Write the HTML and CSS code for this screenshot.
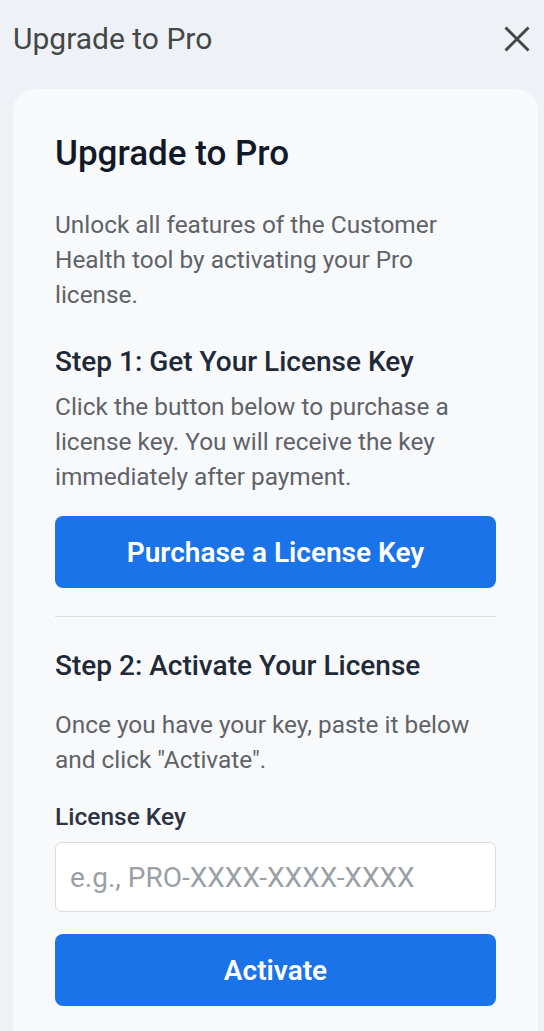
FILE: index.html
```html
<!DOCTYPE html>
<html lang="en">
<head>
<meta charset="utf-8">
<title>Upgrade to Pro</title>
<link rel="stylesheet" href="styles.css">
</head>
<body>
  <header class="panel-header">
    <h1 class="panel-title">Upgrade to Pro</h1>
    <button class="close-btn" aria-label="Close">
      <svg width="26" height="26" viewBox="0 0 26 26"><path d="M1.5 1.5 L24.5 24.5 M24.5 1.5 L1.5 24.5" stroke="#444746" stroke-width="3" stroke-linecap="butt" fill="none"/></svg>
    </button>
  </header>
  <main class="card">
    <h2 class="card-title">Upgrade to Pro</h2>
    <p class="intro">Unlock all features of the Customer Health tool by activating your Pro license.</p>

    <h3 class="step-title">Step 1: Get Your License Key</h3>
    <p class="step-text step-text-1">Click the button below to purchase a license key. You will receive the key immediately after payment.</p>
    <button class="primary-btn">Purchase a License Key</button>

    <hr class="divider">

    <h3 class="step-title">Step 2: Activate Your License</h3>
    <p class="step-text step-text-2">Once you have your key, paste it below and click "Activate".</p>

    <label class="field-label" for="key">License Key</label>
    <input class="field-input" id="key" type="text" placeholder="e.g., PRO-XXXX-XXXX-XXXX">
    <button class="primary-btn activate-btn">Activate</button>
  </main>
</body>
</html>
```
FILE: styles.css
```css
* { box-sizing: border-box; }
html, body { margin: 0; padding: 0; }
body {
  background: #eef2f7;
  font-family: Roboto, "Noto Sans", "Liberation Sans", sans-serif;
  overflow: hidden;
  height: 1031px;
}
.panel-header {
  display: flex;
  align-items: center;
  justify-content: space-between;
  padding: 19px 14px 0 13px;
}
.panel-title {
  margin: 0;
  font-size: 30px;
  line-height: 40px;
  font-weight: 400;
  color: #444746;
}
.close-btn {
  border: 0;
  background: none;
  padding: 0;
  width: 26px;
  height: 26px;
  display: flex;
}
.card {
  margin: 30px 6px 0 13px;
  background: #f8f9fb;
  border-radius: 22px 22px 0 0;
  padding: 45px 42px 40px 42px;
  min-height: 960px;
}
.card-title {
  margin: 0;
  font-size: 35px;
  line-height: 40px;
  font-weight: 500;
  color: #111827;
}
.intro, .step-text {
  margin: 0;
  font-size: 24.4px;
  line-height: 35px;
  color: #5f6368;
}
.intro { margin-top: 33px; }
.step-title {
  margin: 34px 0 0;
  font-size: 28px;
  line-height: 32px;
  font-weight: 500;
  color: #1f2937;
}
.step-text-1 { margin-top: 11px; }
.step-text-2 { margin-top: 25px; }
.primary-btn {
  display: block;
  width: 100%;
  height: 72px;
  margin-top: 22px;
  border: 0;
  border-radius: 8px;
  background: #1a73e8;
  color: #ffffff;
  font-family: inherit;
  font-size: 28px;
  font-weight: 600;
}
.divider {
  border: 0;
  border-top: 1px solid #dcdee2;
  margin: 28px 0 0;
}
.divider + .step-title { margin-top: 33px; }
.field-label {
  display: block;
  margin-top: 25px;
  font-size: 24.5px;
  line-height: 30px;
  font-weight: 500;
  color: #2d3340;
}
.field-input {
  display: block;
  width: 100%;
  height: 70px;
  margin-top: 10px;
  padding: 0 14px;
  border: 1px solid #d9dce1;
  border-radius: 7px;
  background: #ffffff;
  font-family: inherit;
  font-size: 28px;
  color: #333;
}
.field-input::placeholder { color: #9aa0a6; }
.activate-btn { margin-top: 22px; }
```
